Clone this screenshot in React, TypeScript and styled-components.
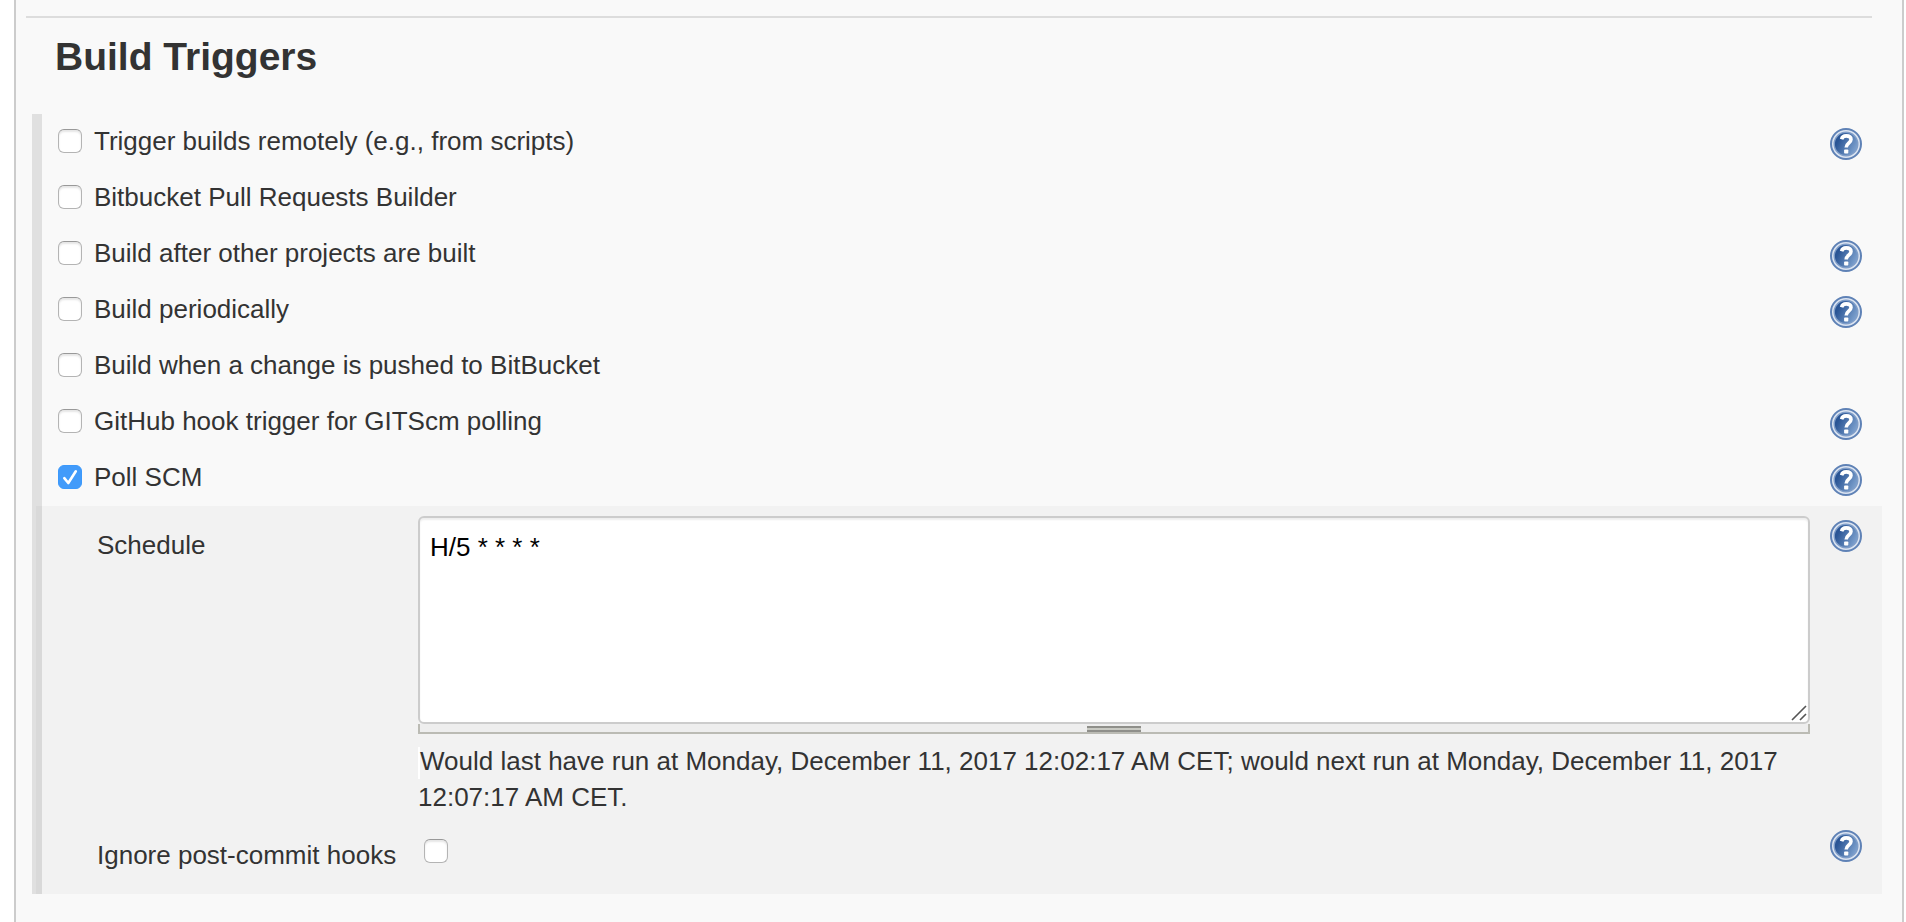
import React, { useState } from "react";
import styled, { createGlobalStyle } from "styled-components";

const GlobalStyle = createGlobalStyle`
  * { box-sizing: border-box; }
  body {
    margin: 0;
    background: #fff;
    color: #333;
    font-family: "Liberation Sans", Helvetica, Arial, sans-serif;
    font-size: 26px;
    line-height: 36px;
  }
`;

const Panel = styled.main`
  min-height: 100vh;
  margin: 0 2px 0 14px;
  padding: 16px 20px 28px 16px;
  border: solid #ccc;
  border-width: 0 2px;
  background: #f9f9f9;
`;

const Divider = styled.hr`
  height: 2px;
  margin: 0 10px 0 -6px;
  border: 0;
  background: #ddd;
`;

const Title = styled.h1`
  margin: 0;
  padding: 15px 23px 33px;
  font-size: 39px;
  line-height: 48px;
`;

const Triggers = styled.section`
  display: flex;
  flex-direction: column;
  border-left: 10px solid #e0e0e0;
`;

const TriggerRow = styled.div`
  display: flex;
  align-items: flex-start;
  justify-content: space-between;
  height: 56px;
  padding: 10px 20px 0 16px;
`;

const TriggerLabel = styled.label`
  display: flex;
  align-items: center;
  gap: 12px;
  line-height: 34px;
`;

const Checkbox = styled.input`
  appearance: none;
  flex: none;
  width: 24px;
  height: 24px;
  margin: 0;
  border: 1px solid #b4b4b4;
  border-top-color: #999;
  border-radius: 6px;
  background: #fff;
  box-shadow: inset 0 2px 2px #e6e6e6;

  &:checked {
    border-color: #3b99fc;
    box-shadow: none;
    background: #429bfa
      url("data:image/svg+xml,%3Csvg xmlns='http://www.w3.org/2000/svg' viewBox='0 0 24 24' fill='none' stroke='white' stroke-width='2.6' stroke-linecap='round' stroke-linejoin='round'%3E%3Cpath d='M6.3 13.2l4 4.8L17.8 6.3'/%3E%3C/svg%3E")
      center / 24px 24px no-repeat;
  }
`;

const HelpButton = styled.button`
  flex: none;
  width: 32px;
  height: 32px;
  margin-top: 4px;
  padding: 0;
  border: 0;
  background: none;
  cursor: pointer;

  svg { display: block; }
`;

const Settings = styled.div`
  margin-left: -6px;
  padding-bottom: 21px;
  background: rgba(0, 0, 0, 0.026);
`;

const SettingRow = styled.div`
  display: grid;
  grid-template-columns: 301px minmax(0, 1fr) 32px;
  column-gap: 20px;
  align-items: start;
  padding: 10px 20px 0 61px;
`;

const SettingLabel = styled.label`
  padding-top: 11px;
`;

const CheckCell = styled.div`
  display: flex;
  padding: 13px 0 0 6px;
`;

const ScheduleField = styled.div`
  display: flex;
  flex-direction: column;
`;

const ScheduleInput = styled.textarea`
  display: block;
  width: 100%;
  height: 208px;
  margin: 0;
  padding: 11px 10px;
  border: 2px solid #ccc;
  border-radius: 6px;
  background: #fff;
  box-shadow: inset 0 2px 2px #eee;
  color: #000;
  font: inherit;
  resize: none;
  outline: 0;
`;

const InputWrap = styled.div`
  position: relative;

  svg {
    position: absolute;
    right: 3px;
    bottom: 3px;
  }
`;

const ResizeBar = styled.div`
  display: flex;
  justify-content: center;
  height: 10px;
  padding-top: 2px;
  border: solid #bbbbb4;
  border-width: 0 2px 2px;
  background: #eee;
`;

const Grip = styled.span`
  width: 54px;
  height: 6px;
  border: solid #8f8f8a;
  border-width: 2px 0;
  background: #c9cac3;
`;

const Forecast = styled.p`
  margin: 0;
  padding: 9px 0 1px;

  &::before {
    content: "";
    display: inline-block;
    width: 2px;
    height: 32px;
    vertical-align: -9px;
    background: #fff;
  }
`;

function HelpIcon() {
  return (
    <svg width="32" height="32" viewBox="0 0 32 32" aria-hidden="true">
      <defs>
        <linearGradient id="helpFill" x1="0" y1="0.3" x2="1" y2="0.8">
          <stop offset="0.15" stopColor="#2a5595" />
          <stop offset="1" stopColor="#86a9d4" />
        </linearGradient>
      </defs>
      <circle cx="16" cy="16" r="15" fill="#dbe4f1" stroke="#5f82b6" strokeWidth="2" />
      <circle cx="16" cy="16" r="11.8" fill="url(#helpFill)" stroke="#7f9dc8" strokeWidth="1.4" />
      <path
        d="M11.6 11.2c.6-2.4 2.4-3.3 4.6-3.3 2.9 0 4.8 1.3 4.8 3.7 0 3.6-4.8 3.7-4.8 7.8"
        fill="none"
        stroke="#fff"
        strokeWidth="3.6"
      />
      <rect x="14.1" y="21.4" width="4.2" height="4.2" rx="0.8" fill="#fff" />
    </svg>
  );
}

function Help({ topic }: { topic: string }) {
  return (
    <HelpButton type="button" aria-label={`Help for ${topic}`}>
      <HelpIcon />
    </HelpButton>
  );
}

const triggers = [
  { name: "Trigger builds remotely (e.g., from scripts)", help: true },
  { name: "Bitbucket Pull Requests Builder", help: false },
  { name: "Build after other projects are built", help: true },
  { name: "Build periodically", help: true },
  { name: "Build when a change is pushed to BitBucket", help: false },
  { name: "GitHub hook trigger for GITScm polling", help: true },
  { name: "Poll SCM", help: true },
];

export default function App() {
  const [enabled, setEnabled] = useState<string[]>(["Poll SCM"]);
  const [schedule, setSchedule] = useState("H/5 * * * *");

  const toggle = (name: string) =>
    setEnabled((list) => (list.includes(name) ? list.filter((n) => n !== name) : [...list, name]));

  return (
    <>
      <GlobalStyle />
      <Panel>
        <Divider />
        <Title>Build Triggers</Title>
        <Triggers>
          {triggers.map(({ name, help }) => (
            <TriggerRow key={name}>
              <TriggerLabel>
                <Checkbox type="checkbox" checked={enabled.includes(name)} onChange={() => toggle(name)} />
                {name}
              </TriggerLabel>
              {help && <Help topic={name} />}
            </TriggerRow>
          ))}
          {enabled.includes("Poll SCM") && (
            <Settings>
              <SettingRow>
                <SettingLabel htmlFor="schedule">Schedule</SettingLabel>
                <ScheduleField>
                  <InputWrap>
                    <ScheduleInput
                      id="schedule"
                      spellCheck={false}
                      value={schedule}
                      onChange={(e) => setSchedule(e.target.value)}
                    />
                    <svg width="16" height="16" viewBox="0 0 16 16" stroke="#555" strokeWidth="1.6" aria-hidden="true">
                      <path d="M1 15L15 1M9 15l6-6" />
                    </svg>
                  </InputWrap>
                  <ResizeBar>
                    <Grip />
                  </ResizeBar>
                  <Forecast>
                    Would last have run at Monday, December 11, 2017 12:02:17 AM CET; would next run at Monday,
                    December 11, 2017 12:07:17 AM CET.
                  </Forecast>
                </ScheduleField>
                <Help topic="Schedule" />
              </SettingRow>
              <SettingRow>
                <SettingLabel htmlFor="ignore-hooks">Ignore post-commit hooks</SettingLabel>
                <CheckCell>
                  <Checkbox id="ignore-hooks" type="checkbox" />
                </CheckCell>
                <Help topic="Ignore post-commit hooks" />
              </SettingRow>
            </Settings>
          )}
        </Triggers>
      </Panel>
    </>
  );
}
